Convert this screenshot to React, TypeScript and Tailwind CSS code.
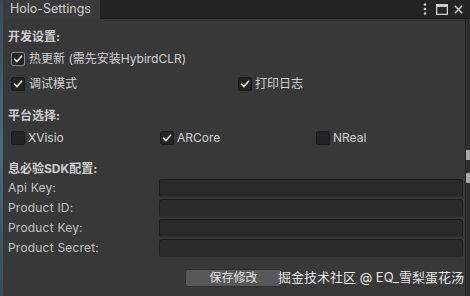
import React from "react";

const font = { fontFamily: 'Inter, "Noto Sans CJK SC", "Liberation Sans", sans-serif' };

function Check({ checked, light }: { checked?: boolean; light?: boolean }) {
  return (
    <div
      className={`w-[14px] h-[14px] rounded-[2px] flex items-center justify-center shrink-0 bg-[#232323] border ${
        light ? "border-[#8a8a8a]" : "border-[#1a1a1a]"
      }`}
    >
      {checked && (
        <svg width="10" height="10" viewBox="0 0 10 10">
          <path d="M1.5 5.2 L4 7.6 L8.6 2.2" stroke="#e8e8e8" strokeWidth="1.6" fill="none" strokeLinecap="round" strokeLinejoin="round" />
        </svg>
      )}
    </div>
  );
}

function Field({ label }: { label: string }) {
  return (
    <div className="flex items-center h-[18px] mb-[2px]">
      <div className="w-[156px] pl-[5px] text-[12px] text-[#c4c4c4] tracking-[0.2px]">{label}</div>
      <div className="w-[304px] h-[18px] bg-[#2a2a2a] border border-[#1c1c1c] border-b-[#303030] rounded-[3px]" />
    </div>
  );
}

export default function App() {
  return (
    <div className="w-[470px] h-[296px] bg-[#383838] relative overflow-hidden flex" style={font}>
      <div className="w-[3px] h-full bg-gradient-to-b from-[#3a4852] via-[#4f6a78] to-[#3b4a55]" />
      <div className="flex-1 flex flex-col">
        {/* title bar */}
        <div className="h-[19px] flex bg-[#232323] border-b border-[#1a1a1a]">
          <div className="w-[97px] h-[19px] bg-[#3a3a3a] flex items-center pl-[7px] text-[12.5px] text-[#d0d0d0]">Holo-Settings</div>
          <div className="flex-1" />
          <div className="flex items-center pr-[7px]">
            <svg width="6" height="14" viewBox="0 0 6 14">
              <circle cx="3" cy="2.5" r="1.3" fill="#c8c8c8" />
              <circle cx="3" cy="7" r="1.3" fill="#c8c8c8" />
              <circle cx="3" cy="11.5" r="1.3" fill="#c8c8c8" />
            </svg>
            <svg width="12" height="11" viewBox="0 0 12 11" className="ml-[8px]">
              <rect x="0.65" y="0.65" width="10.7" height="9.7" stroke="#d0d0d0" strokeWidth="1.3" fill="none" />
              <rect x="0.65" y="0.65" width="10.7" height="2.3" fill="#d0d0d0" />
            </svg>
            <svg width="9" height="9" viewBox="0 0 9 9" className="ml-[6px]">
              <path d="M0.8 0.8 L8.2 8.2 M8.2 0.8 L0.8 8.2" stroke="#d0d0d0" strokeWidth="1.5" />
            </svg>
          </div>
        </div>
        <div className="flex-1 flex">
          <div className="flex-1 flex flex-col pl-[5px]">
            <div className="h-[18px] mt-[9px] flex items-center text-[12px] font-bold text-[#cfcfcf]">开发设置:</div>
            <div className="h-[18px] mt-[4px] flex items-center pl-[3px] gap-[4px] text-[12px] text-[#d2d2d2]">
              <Check checked light />
              <span>热更新 (需先安装HybirdCLR)</span>
            </div>
            <div className="h-[18px] mt-[7px] flex items-center pl-[3px] text-[12px] text-[#d2d2d2]">
              <div className="w-[227px] flex items-center gap-[4px]">
                <Check checked />
                <span>调试模式</span>
              </div>
              <div className="flex items-center gap-[3px]">
                <Check checked />
                <span>打印日志</span>
              </div>
            </div>
            <div className="h-[18px] mt-[14px] flex items-center text-[12px] font-bold text-[#cfcfcf]">平台选择:</div>
            <div className="h-[18px] mt-[4px] flex items-center pl-[3px] text-[12px] text-[#d2d2d2]">
              <div className="w-[149px] flex items-center gap-[3px]">
                <Check />
                <span>XVisio</span>
              </div>
              <div className="w-[156px] flex items-center gap-[3px]">
                <Check checked />
                <span>ARCore</span>
              </div>
              <div className="flex items-center gap-[3px]">
                <Check />
                <span>NReal</span>
              </div>
            </div>
            <div className="h-[18px] mt-[13px] flex items-center text-[12px] font-bold text-[#cfcfcf]">息必验SDK配置:</div>
            <div className="-ml-[5px] mt-[1px] flex flex-col">
              <Field label="Api Key:" />
              <Field label="Product ID:" />
              <Field label="Product Key:" />
              <Field label="Product Secret:" />
            </div>
            <div className="mt-[10px] pl-[177px]">
              <div className="w-[97px] h-[18px] bg-[#585858] border border-[#2e2e2e] rounded-[3px] flex items-center justify-center text-[12px] text-[#e2e2e2]">保存修改</div>
            </div>
          </div>
          <div className="w-[5px] bg-[#2e2e2e] border-l border-[#1e1e1e] relative">
            <div className="absolute left-0 top-[131px] w-[4px] h-[10px] bg-[#a8a8a8]" />
            <div className="absolute left-0 top-[154px] w-[4px] h-[10px] bg-[#a8a8a8]" />
          </div>
        </div>
      </div>
      <div className="absolute left-[278px] top-[268px] text-[13px] text-[#e6e6e6] whitespace-nowrap" style={font}>
        掘金技术社区 @ EQ_雪梨蛋花汤
      </div>
    </div>
  );
}
